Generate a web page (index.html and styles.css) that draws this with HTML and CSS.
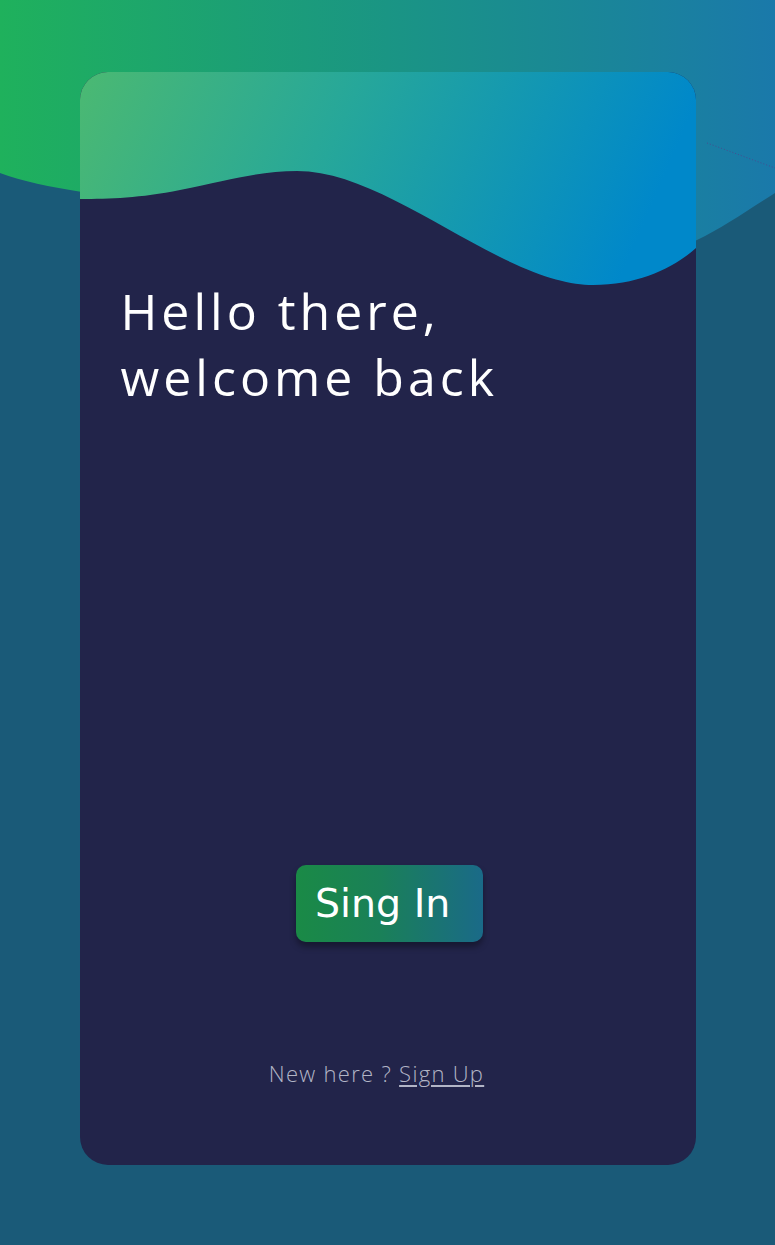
FILE: index.html
```html
<!DOCTYPE html>
<html lang="en">
<head>
<meta charset="utf-8">
<title>Sign in</title>
<link rel="stylesheet" href="styles.css">
</head>
<body>
<svg class="bg-wave" width="775" height="260" viewBox="0 0 775 260" aria-hidden="true">
  <defs>
    <linearGradient id="bgGrad" x1="0" y1="0" x2="1" y2="0">
      <stop offset="0" stop-color="#1fb15c"/>
      <stop offset="0.5" stop-color="#1a9584"/>
      <stop offset="1" stop-color="#1a79aa"/>
    </linearGradient>
  </defs>
  <path d="M0 0 H775 V193 C745 212 722 228 697 240 C600 290 300 220 82 192 C50 187 22 181 0 173 Z" fill="url(#bgGrad)"/>
  <line x1="707" y1="143" x2="775" y2="168" stroke="#5a3a8a" stroke-width="1" stroke-dasharray="1 2" opacity="0.7"/>
</svg>
<main class="card">
  <svg class="card-wave" width="616" height="220" viewBox="0 0 616 220" aria-hidden="true">
    <defs>
      <linearGradient id="cardGrad" x1="0" y1="0" x2="1" y2="0.15">
        <stop offset="0" stop-color="#4bb972"/>
        <stop offset="0.45" stop-color="#26a79a"/>
        <stop offset="1" stop-color="#0088ca"/>
      </linearGradient>
    </defs>
    <path d="M0 127 C30 127 60 126 100 118 C150 108 180 99 217 99 C280 99 350 150 420 185 C460 205 490 213 513 213 C560 213 595 195 616 176 V0 H0 Z" fill="url(#cardGrad)"/>
  </svg>
  <h1 class="title">Hello there,<br>welcome back</h1>
  <button class="signin" type="button">Sing In</button>
  <p class="footer">New here ? <a class="signup" href="#">Sign Up</a></p>
</main>
</body>
</html>
```
FILE: styles.css
```css
html, body {
  margin: 0;
  padding: 0;
}
body {
  background: #1a5a78;
  width: 775px;
  height: 1245px;
  position: relative;
  overflow: hidden;
}
.bg-wave {
  position: absolute;
  left: 0;
  top: 0;
  display: block;
}
.card {
  position: relative;
  z-index: 1;
  box-sizing: border-box;
  width: 616px;
  height: 1093px;
  margin: 72px auto 0;
  background: #22244a;
  border-radius: 28px;
  overflow: hidden;
  padding-top: 206px;
  display: flex;
  flex-direction: column;
  align-items: center;
}
.card-wave {
  position: absolute;
  left: 0;
  top: 0;
  display: block;
}
.title {
  position: relative;
  align-self: stretch;
  margin: 0;
  padding-left: 41px;
  font-family: "Open Sans", "DejaVu Sans", sans-serif;
  font-weight: 400;
  font-size: 50px;
  line-height: 66px;
  letter-spacing: 4px;
  color: #ffffff;
}
.signin {
  margin: 455px 0 0 4px;
  width: 187px;
  height: 77px;
  border: none;
  border-radius: 10px;
  background: linear-gradient(90deg, #1a8a46 0%, #1a8058 45%, #1a6a88 100%);
  color: #ffffff;
  font-family: "DejaVu Sans", sans-serif;
  font-size: 39.5px;
  box-shadow: 0 5px 6px rgba(0, 0, 0, 0.35);
  display: flex;
  align-items: center;
  justify-content: flex-start;
  padding: 0 0 2px 19px;
}
.footer {
  margin: 116px 0 0;
  padding-right: 22px;
  font-family: "Open Sans", "DejaVu Sans", sans-serif;
  font-weight: 300;
  font-size: 22px;
  line-height: 30px;
  letter-spacing: 1.3px;
  color: #b2b5c6;
}
.signup {
  color: #b2b5c6;
  text-decoration: underline;
  text-underline-offset: 3px;
}
```
